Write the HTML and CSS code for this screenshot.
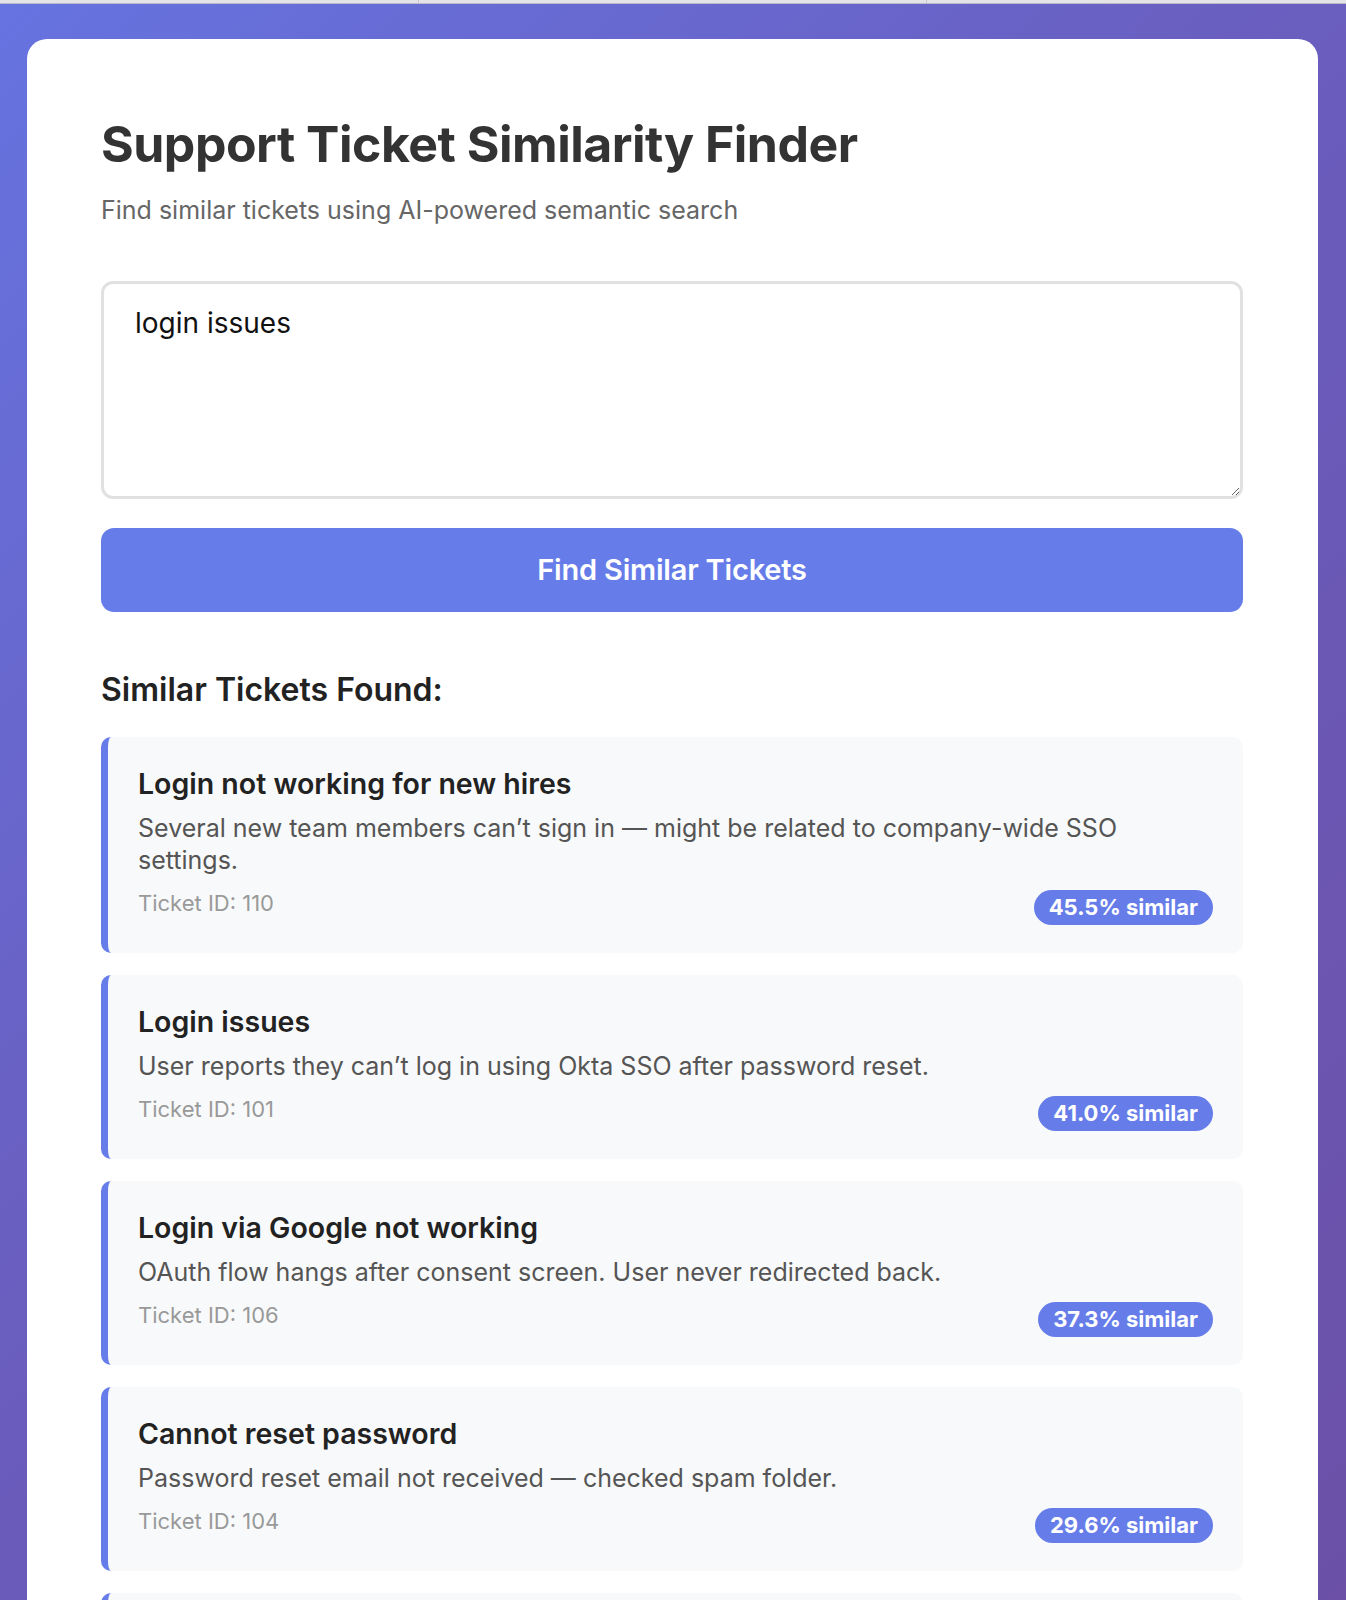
FILE: index.html
```html
<!DOCTYPE html>
<html lang="en">
<head>
<meta charset="utf-8">
<title>Support Ticket Similarity Finder</title>
<link rel="stylesheet" href="styles.css">
</head>
<body>
<div class="topbar"><span class="tab"></span><span class="tab mid"></span><span class="tab last"></span></div>
<main class="panel">
  <h1 class="title">Support Ticket Similarity Finder</h1>
  <p class="subtitle">Find similar tickets using AI-powered semantic search</p>
  <textarea class="query">login issues</textarea>
  <button class="search-btn" type="button">Find Similar Tickets</button>
  <h2 class="results-title">Similar Tickets Found:</h2>
  <div class="results">
    <article class="ticket">
      <h3 class="ticket-title">Login not working for new hires</h3>
      <p class="ticket-desc">Several new team members can’t sign in — might be related to company-wide SSO settings.</p>
      <div class="ticket-meta"><span class="ticket-id">Ticket ID: 110</span><span class="badge">45.5% similar</span></div>
    </article>
    <article class="ticket">
      <h3 class="ticket-title">Login issues</h3>
      <p class="ticket-desc">User reports they can’t log in using Okta SSO after password reset.</p>
      <div class="ticket-meta"><span class="ticket-id">Ticket ID: 101</span><span class="badge">41.0% similar</span></div>
    </article>
    <article class="ticket">
      <h3 class="ticket-title">Login via Google not working</h3>
      <p class="ticket-desc">OAuth flow hangs after consent screen. User never redirected back.</p>
      <div class="ticket-meta"><span class="ticket-id">Ticket ID: 106</span><span class="badge">37.3% similar</span></div>
    </article>
    <article class="ticket">
      <h3 class="ticket-title">Cannot reset password</h3>
      <p class="ticket-desc">Password reset email not received — checked spam folder.</p>
      <div class="ticket-meta"><span class="ticket-id">Ticket ID: 104</span><span class="badge">29.6% similar</span></div>
    </article>
    <article class="ticket">
      <h3 class="ticket-title">Account locked after failed attempts</h3>
      <p class="ticket-desc">User locked out after entering the wrong password several times.</p>
      <div class="ticket-meta"><span class="ticket-id">Ticket ID: 108</span><span class="badge">24.1% similar</span></div>
    </article>
  </div>
</main>
</body>
</html>
```

FILE: styles.css
```css
* {
  box-sizing: border-box;
}

html {
  background: linear-gradient(135deg, #6673e0 0%, #6a5cbc 45%, #6c4ea4 100%);
  min-height: 100%;
}

body {
  margin: 0;
  font-family: Inter, "Noto Sans", "Liberation Sans", sans-serif;
  color: #333;
}

.topbar {
  height: 4px;
  background: #e4e4e8;
  border-bottom: 1px solid #b9b9c9;
  display: flex;
}

.tab {
  width: 490px;
  border-right: 1px solid #c8c8d0;
}

.tab.mid {
  width: 594px;
}

.tab.last {
  border-right: none;
}

.panel {
  margin: 35px 28px 0 27px;
  background: #fff;
  border-radius: 20px;
  padding: 75px 75px 74px 74px;
}

.title {
  margin: 0;
  font-size: 50px;
  font-weight: 700;
  line-height: 1.21;
  letter-spacing: -0.5px;
  color: #333;
}

.subtitle {
  margin: 20px 0 0;
  font-size: 25px;
  line-height: 1.21;
  color: #666;
}

.query {
  display: block;
  width: 100%;
  height: 218px;
  margin-top: 56px;
  padding: 23px 31px;
  border: 3px solid #e1e1e1;
  border-radius: 12px;
  font-family: Inter, "Noto Sans", sans-serif;
  font-size: 28px;
  line-height: 1.21;
  color: #111;
  background: #fff;
  resize: vertical;
}

.search-btn {
  display: block;
  width: 100%;
  height: 84px;
  margin-top: 29px;
  border: none;
  border-radius: 13px;
  background: #667de9;
  color: #fff;
  font-family: Inter, "Noto Sans", sans-serif;
  font-size: 29px;
  font-weight: 600;
  letter-spacing: -0.2px;
}

.results-title {
  margin: 59px 0 0;
  font-size: 32px;
  font-weight: 600;
  line-height: 1.21;
  color: #222;
}

.results {
  margin-top: 28px;
  display: flex;
  flex-direction: column;
  gap: 22px;
}

.ticket {
  background: #f8f9fa;
  border-left: 7px solid #667de9;
  border-radius: 10px;
  padding: 29px 30px 28px 30px;
}

.ticket-title {
  margin: 0;
  font-size: 28.5px;
  font-weight: 600;
  line-height: 35px;
  color: #222;
}

.ticket-desc {
  margin: 11px 0 0;
  font-size: 25px;
  line-height: 32px;
  color: #555;
}

.ticket-meta {
  margin-top: 14px;
  display: flex;
  justify-content: space-between;
  align-items: flex-start;
}

.ticket-id {
  font-size: 22px;
  line-height: 27px;
  color: #999;
}

.badge {
  background: #667de9;
  color: #fff;
  font-size: 22px;
  font-weight: 700;
  line-height: 35px;
  height: 35px;
  padding: 0 15px;
  border-radius: 18px;
}
```
